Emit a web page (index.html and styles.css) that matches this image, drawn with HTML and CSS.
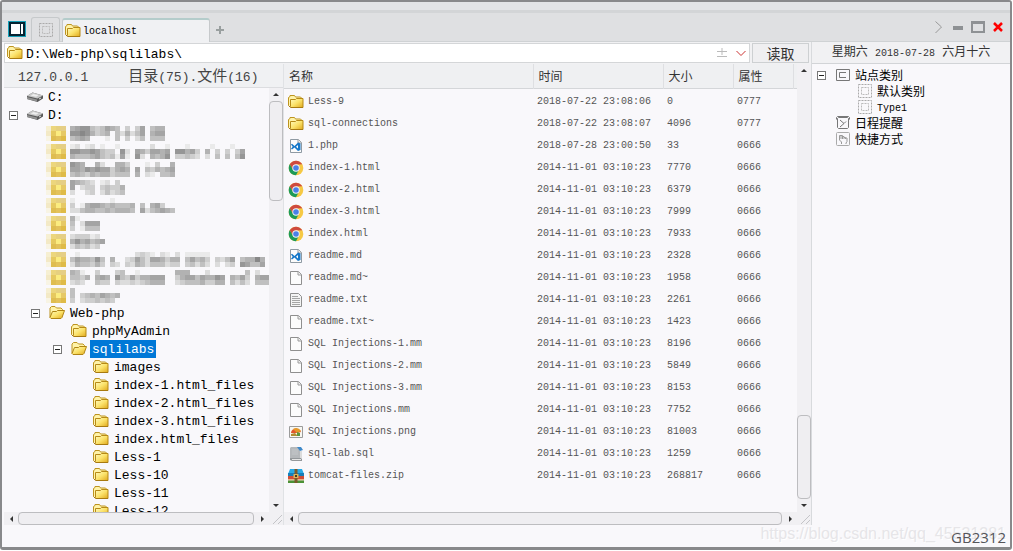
FILE: index.html
```html
<!DOCTYPE html>
<html lang="zh-CN">
<head>
<meta charset="utf-8">
<title>localhost</title>
<link rel="stylesheet" href="styles.css">
</head>
<body>
<svg class="defs" aria-hidden="true">
  <defs>
    <linearGradient id="gold" x1="0" y1="0" x2="1" y2="1"><stop offset="0" stop-color="#fffbc0"/><stop offset=".5" stop-color="#fbe26a"/><stop offset="1" stop-color="#e0a81c"/></linearGradient>
    <symbol id="folder" viewBox="0 0 16 16"><path d="M.5 11.5V3.5L2 2.5V1.5h4.500l1 1.500h5l1 1V13" fill="#fff3a8" stroke="#bd9420"/><path d="M3.500 13.500L2.500 12.500V5.500h5l1-1h6.500v9z" fill="url(#gold)" stroke="#b78a16"/><path d="M.5 11.500l2 2h12.500" fill="none" stroke="#a87a10"/></symbol>
    <symbol id="folder-open" viewBox="0 0 16 16"><path d="M1 12.500V3l1.500-1.500H6L7.500 3H12l1.500 1.500V7" fill="#fff3a8" stroke="#bd9420"/><path d="M1 12.500L3.500 6.500h4l1-1h7L13 12.500l-1 1H2z" fill="url(#gold)" stroke="#b08413"/></symbol>
    <symbol id="disk" viewBox="0 0 16 16"><path d="M0 7l5.500-3.500L16 6.500v3L10.500 13 0 10z" fill="#595959"/><path d="M0 7l5.500-3.500L16 6.500 10.500 9.500z" fill="#c9c9c9"/><path d="M3.500 6.500l3-1.500 5 1.200-2.500 1.600z" fill="#eee"/><path d="M0 8l10 2.500v2L0 10z" fill="#929292"/><path d="M12 9.500l2-1v1l-2 1z" fill="#ddd"/></symbol>
    <symbol id="page" viewBox="0 0 16 16"><path d="M2.500 1.500h8l3 3v10h-11z" fill="#fcfcfc" stroke="#8f8f8f"/><path d="M10 1.500v3.500h3.500" fill="#eee" stroke="#9c9c9c"/></symbol>
    <symbol id="text" viewBox="0 0 16 16"><path d="M2.500 1.500h8l3 3v10h-11z" fill="#f4f4f4" stroke="#8f8f8f"/><path d="M4 4.500h6M4 6.500h8M4 8.500h8M4 10.500h8M4 12.500h8" stroke="#a5a5a5"/></symbol>
    <symbol id="code" viewBox="0 0 16 16"><path d="M2.500 1.500h8l3 3v10h-11z" fill="#fcfcfc" stroke="#8f9aa3"/><path d="M10 1.500v3.500h3.500" fill="#eee" stroke="#9c9c9c"/><path d="M3 6.500l1-.7L6.500 8 10 4.500l2.500 1v6.500L10 13 6.500 9.500 4 11.500l-1-.7 1.700-2.100zM10 7L8 8.700l2 1.700z" fill="#1677c8" fill-rule="evenodd"/></symbol>
    <symbol id="chrome" viewBox="0 0 16 16"><circle cx="8" cy="8" r="7.300" fill="#f6c944"/><path d="M1.700 4.350A7.300 7.300 0 0 1 14.300 4.350L8 4.500 4.800 9.500z" fill="#cf4a3f"/><path d="M1.700 4.350A7.300 7.300 0 0 0 8 15.300L11.100 9.600 4.900 9.600z" fill="#1c9a58"/><circle cx="8" cy="8" r="3.700" fill="#f5f5f5"/><circle cx="8" cy="8" r="2.800" fill="#4a80e8"/></symbol>
    <symbol id="picture" viewBox="0 0 16 16"><path d="M1.500 2.500h13v11h-13z" fill="#f7f7f2" stroke="#9b9b9b"/><path d="M3 9c0-5 8-6 10-1l-4 1z" fill="#e0562c"/><path d="M5 5c3-2 6-1 8 2l-4 2z" fill="#e69829"/><path d="M3 12v-2l4-1 3 3z" fill="#b08c32"/><path d="M9 8v4h3V9z" fill="#5c963e"/></symbol>
    <symbol id="script" viewBox="0 0 16 16"><path d="M3 1h9v11H2V2z" fill="#b5b8bb"/><path d="M2 12h11l1 1v2H4l-2-1z" fill="#94989b"/><path d="M4 13h9v1H4z" fill="#e4e4e4"/><path d="M4 4h6M4 6h6M4 8h6" stroke="#c4c7ca"/><path d="M9 1h4l2 3-3 1z" fill="#3d88c9"/><path d="M12 5h2v7h-2z" fill="#dcdcdc"/></symbol>
    <symbol id="archive" viewBox="0 0 16 16"><path d="M2 1h12l2 5H0z" fill="#27aae6"/><path d="M0 5h16v3H0z" fill="#177fb9"/><path d="M0 8h16v3H0z" fill="#cf4d36"/><path d="M0 11h16v1.500H0z" fill="#e8b28a"/><path d="M0 12.500h16V15H0z" fill="#4c9237"/><path d="M6.500 1h3v14h-3z" fill="#7b5a2c"/><path d="M5.500 6h5v4h-5z" fill="#d9b45b"/><path d="M7 7h2v2H7z" fill="#4b3a20"/></symbol>
    <symbol id="dashed" viewBox="0 0 16 16"><path d="M1.500 1.500h13v13h-13z" fill="none" stroke="#aaa" stroke-dasharray="2 1"/><path d="M4.500 4.500h7v7h-7z" fill="none" stroke="#bbb" stroke-dasharray="2 1"/></symbol>
    <symbol id="category" viewBox="0 0 16 16"><path d="M1.500 2.500h13v11h-13z" fill="none" stroke="#777"/><path d="M11 5.500H4.500v5H11" fill="none" stroke="#777"/></symbol>
    <symbol id="clock" viewBox="0 0 16 16"><path d="M3.500 2.500h9l1 1v9l-1 1h-9l-1-1v-9zM1.500 4.500v-2l1-1h11l1 1v2" fill="none" stroke="#777"/><path d="M5 5l4 3.500L5 12M9 8.500l2-2" fill="none" stroke="#777"/></symbol>
    <symbol id="hand" viewBox="0 0 16 16"><rect x="1.500" y="1.500" width="13" height="13" rx="1" fill="none" stroke="#aaa"/><path d="M6.500 13V11L4.500 9V4.500H6V8M6 4.500h1.500V8M7.500 5.500H9V8M9 6.500h1.500V8M10.500 7H12v3.500l-1 1.500v1" fill="none" stroke="#999"/></symbol>
  </defs>
</svg>

<div class="window">
  <div class="caption"></div>
  <header class="tabs">
    <button class="panel-toggle" aria-label="侧栏"><svg viewBox="0 0 18 16"><path d="M0 0h18v16H0z" fill="#16a0b8"/><path d="M1 1h16v14H1z" fill="#062331"/><path d="M3 3h9v10H3zM13 3h2v10h-2z" fill="#fff"/></svg></button>
    <button class="tab tab-blank" aria-label="空白页"><svg class="icon"><use href="#dashed"/></svg></button>
    <button class="tab tab-active"><svg class="icon"><use href="#folder"/></svg><span>localhost</span></button>
    <button class="tab-add" aria-label="新建"><svg viewBox="0 0 10 10"><path d="M5 1v8M1 5h8" stroke="#999f9f" stroke-width="2"/></svg></button>
    <div class="window-buttons">
      <button aria-label="更多"><svg class="glyph" viewBox="0 0 16 16"><path d="M5.500 2.500l6 5.500-6 6" fill="none" stroke="#999"/></svg></button>
      <button aria-label="最小化"><svg class="glyph" viewBox="0 0 16 16"><path d="M3 7h10v4H3z" fill="#8e9194"/></svg></button>
      <button aria-label="最大化"><svg class="glyph" viewBox="0 0 16 16"><path d="M1 2h14v12H1zM3 5v7h10V5z" fill="#8e9194" fill-rule="evenodd"/></svg></button>
      <button aria-label="关闭"><svg class="glyph" viewBox="0 0 16 16"><path d="M4 4l8 8M12 4l-8 8" stroke="#f00" stroke-width="2.500"/></svg></button>
    </div>
  </header>

  <div class="body">
    <main class="manager">
      <form class="address">
        <div class="address-box">
          <svg class="icon"><use href="#folder"/></svg>
          <input class="path" type="text" aria-label="路径" value="D:\Web-php\sqlilabs\">
          <button class="mini" type="button" aria-label="上级"><svg viewBox="0 0 12 12"><path d="M6 1v7M1 4.500h10M1 9.500h10" stroke="#bbb" fill="none"/></svg></button>
          <button class="mini" type="button" aria-label="历史"><svg viewBox="0 0 12 12"><path d="M1.500 4L6 8.500 10.500 4" stroke="#c33" fill="none"/></svg></button>
        </div>
        <button class="read" type="button">读取</button>
      </form>

      <div class="panes">
        <section class="tree-pane">
          <div class="status"><span>127.0.0.1</span><span><b>目录</b>(75).<b>文件</b>(16)</span></div>
          <div class="scroll-area">
            <ul class="tree">
              <li><div class="node"><i></i><svg class="icon"><use href="#disk"/></svg><span>C:</span></div></li>
              <li><div class="node"><button class="fold" aria-label="折叠"></button><svg class="icon"><use href="#disk"/></svg><span>D:</span></div>
                <ul>
                  <li class="mosaics" id="mosaics"></li>
                  <li><div class="node"><button class="fold" aria-label="折叠"></button><svg class="icon"><use href="#folder-open"/></svg><span>Web-php</span></div>
                    <ul>
                      <li><div class="node"><i></i><svg class="icon"><use href="#folder"/></svg><span>phpMyAdmin</span></div></li>
                      <li><div class="node"><button class="fold" aria-label="折叠"></button><svg class="icon"><use href="#folder-open"/></svg><span class="selected">sqlilabs</span></div>
                        <ul>
                          <li><div class="node"><i></i><svg class="icon"><use href="#folder"/></svg><span>images</span></div></li>
                          <li><div class="node"><i></i><svg class="icon"><use href="#folder"/></svg><span>index-1.html_files</span></div></li>
                          <li><div class="node"><i></i><svg class="icon"><use href="#folder"/></svg><span>index-2.html_files</span></div></li>
                          <li><div class="node"><i></i><svg class="icon"><use href="#folder"/></svg><span>index-3.html_files</span></div></li>
                          <li><div class="node"><i></i><svg class="icon"><use href="#folder"/></svg><span>index.html_files</span></div></li>
                          <li><div class="node"><i></i><svg class="icon"><use href="#folder"/></svg><span>Less-1</span></div></li>
                          <li><div class="node"><i></i><svg class="icon"><use href="#folder"/></svg><span>Less-10</span></div></li>
                          <li><div class="node"><i></i><svg class="icon"><use href="#folder"/></svg><span>Less-11</span></div></li>
                          <li><div class="node"><i></i><svg class="icon"><use href="#folder"/></svg><span>Less-12</span></div></li>
                        </ul>
                      </li>
                    </ul>
                  </li>
                </ul>
              </li>
            </ul>
            <div class="vbar"><span class="arrow up"></span><div class="track"><div class="thumb thumb-tree"></div></div><span class="arrow down"></span></div>
          </div>
          <div class="hbar"><span class="arrow left"></span><div class="thumb"></div><span class="arrow right"></span><svg class="grip" viewBox="0 0 12 12"><path d="M2 11l9-9M7 11l4-4" stroke="#c4c4c8"/></svg></div>
        </section>

        <section class="file-pane">
          <div class="scroll-area">
            <div class="list">
              <table>
                <colgroup><col><col class="c-time"><col class="c-size"><col class="c-attr"><col class="c-end"></colgroup>
                <thead><tr><th>名称</th><th>时间</th><th>大小</th><th>属性</th><td></td></tr></thead>
                <tbody>
                  <tr><td><div class="file"><svg class="icon"><use href="#folder"/></svg>Less-9</div></td><td>2018-07-22 23:08:06</td><td>0</td><td>0777</td></tr>
                  <tr><td><div class="file"><svg class="icon"><use href="#folder"/></svg>sql-connections</div></td><td>2018-07-22 23:08:07</td><td>4096</td><td>0777</td></tr>
                  <tr><td><div class="file"><svg class="icon"><use href="#code"/></svg>1.php</div></td><td>2018-07-28 23:00:50</td><td>33</td><td>0666</td></tr>
                  <tr><td><div class="file"><svg class="icon"><use href="#chrome"/></svg>index-1.html</div></td><td>2014-11-01 03:10:23</td><td>7770</td><td>0666</td></tr>
                  <tr><td><div class="file"><svg class="icon"><use href="#chrome"/></svg>index-2.html</div></td><td>2014-11-01 03:10:23</td><td>6379</td><td>0666</td></tr>
                  <tr><td><div class="file"><svg class="icon"><use href="#chrome"/></svg>index-3.html</div></td><td>2014-11-01 03:10:23</td><td>7999</td><td>0666</td></tr>
                  <tr><td><div class="file"><svg class="icon"><use href="#chrome"/></svg>index.html</div></td><td>2014-11-01 03:10:23</td><td>7933</td><td>0666</td></tr>
                  <tr><td><div class="file"><svg class="icon"><use href="#code"/></svg>readme.md</div></td><td>2014-11-01 03:10:23</td><td>2328</td><td>0666</td></tr>
                  <tr><td><div class="file"><svg class="icon"><use href="#page"/></svg>readme.md~</div></td><td>2014-11-01 03:10:23</td><td>1958</td><td>0666</td></tr>
                  <tr><td><div class="file"><svg class="icon"><use href="#text"/></svg>readme.txt</div></td><td>2014-11-01 03:10:23</td><td>2261</td><td>0666</td></tr>
                  <tr><td><div class="file"><svg class="icon"><use href="#page"/></svg>readme.txt~</div></td><td>2014-11-01 03:10:23</td><td>1423</td><td>0666</td></tr>
                  <tr><td><div class="file"><svg class="icon"><use href="#page"/></svg>SQL Injections-1.mm</div></td><td>2014-11-01 03:10:23</td><td>8196</td><td>0666</td></tr>
                  <tr><td><div class="file"><svg class="icon"><use href="#page"/></svg>SQL Injections-2.mm</div></td><td>2014-11-01 03:10:23</td><td>5849</td><td>0666</td></tr>
                  <tr><td><div class="file"><svg class="icon"><use href="#page"/></svg>SQL Injections-3.mm</div></td><td>2014-11-01 03:10:23</td><td>8153</td><td>0666</td></tr>
                  <tr><td><div class="file"><svg class="icon"><use href="#page"/></svg>SQL Injections.mm</div></td><td>2014-11-01 03:10:23</td><td>7752</td><td>0666</td></tr>
                  <tr><td><div class="file"><svg class="icon"><use href="#picture"/></svg>SQL Injections.png</div></td><td>2014-11-01 03:10:23</td><td>81003</td><td>0666</td></tr>
                  <tr><td><div class="file"><svg class="icon"><use href="#script"/></svg>sql-lab.sql</div></td><td>2014-11-01 03:10:23</td><td>1259</td><td>0666</td></tr>
                  <tr><td><div class="file"><svg class="icon"><use href="#archive"/></svg>tomcat-files.zip</div></td><td>2014-11-01 03:10:23</td><td>268817</td><td>0666</td></tr>
                </tbody>
              </table>
            </div>
            <div class="vbar"><span class="arrow up"></span><div class="track track-end"><div class="thumb thumb-list"></div></div><span class="arrow down"></span></div>
          </div>
          <div class="hbar"><span class="arrow left"></span><div class="thumb"></div><span class="arrow right"></span><svg class="grip" viewBox="0 0 12 12"><path d="M2 11l9-9M7 11l4-4" stroke="#c4c4c8"/></svg></div>
        </section>
      </div>
    </main>

    <aside class="side">
      <div class="date">星期六 <span>2018-07-28</span> 六月十六</div>
      <ul class="categories">
        <li><div class="node"><button class="fold" aria-label="折叠"></button><svg class="icon"><use href="#category"/></svg><span>站点类别</span></div>
          <ul>
            <li><div class="node"><i></i><svg class="icon"><use href="#dashed"/></svg><span>默认类别</span></div></li>
            <li><div class="node"><i></i><svg class="icon"><use href="#dashed"/></svg><span class="latin">Type1</span></div></li>
          </ul>
        </li>
        <li><div class="node"><i></i><svg class="icon"><use href="#clock"/></svg><span>日程提醒</span></div></li>
        <li><div class="node"><i></i><svg class="icon"><use href="#hand"/></svg><span>快捷方式</span></div></li>
      </ul>
    </aside>
  </div>

  <footer class="foot">
    <span class="watermark">https://blog.csdn.net/qq_45531381</span>
    <span class="encoding">GB2312</span>
  </footer>
</div>
<script src="mosaic.js"></script>
</body>
</html>
```
FILE: styles.css
```css
* { box-sizing: border-box; }
html, body { height: 100%; }
body {
  margin: 0;
  background: #fff;
  color: #000;
  font-family: "Liberation Mono", "Noto Sans CJK SC", monospace;
  font-size: 13px;
}
button { margin: 0; padding: 0; border: 0; background: none; color: inherit; font: inherit; }
ul { margin: 0; padding: 0; list-style: none; }
svg { display: block; flex: none; }
.defs { position: absolute; width: 0; height: 0; }
.icon { width: 16px; height: 16px; }

.window {
  display: flex;
  flex-direction: column;
  height: calc(100% - 1px);
  margin-right: 1px;
  border: 2px solid #88898b;
  border-bottom-width: 3px;
  border-radius: 3px;
  background: #f9f8fb;
  overflow: hidden;
}
.caption { flex: none; height: 11px; background: #e2e4e6; border-bottom: 3px solid #d3d5d7; }

.tabs {
  display: flex;
  flex: none;
  align-items: flex-end;
  height: 29px;
  padding-left: 6px;
  background: #dfe0e2;
  border-bottom: 1px solid #cfd2d4;
}
.panel-toggle { align-self: center; margin-right: 5px; padding-top: 3px; }
.panel-toggle svg { width: 18px; height: 16px; }
.tab {
  display: flex;
  align-items: center;
  height: 24px;
  border: 1px solid #c6c9cb;
  border-bottom: 0;
  border-radius: 3px 3px 0 0;
}
.tab-blank { justify-content: center; width: 29px; margin-right: 2px; }
.tab-active {
  gap: 2px;
  width: 148px;
  margin-bottom: -1px;
  padding-left: 2px;
  border-top: 2px solid #b4cccb;
  background: #f0f1f3;
  font-size: 10px;
}
.tab-add { width: 20px; height: 22px; padding: 5px; }
.tab-add svg { width: 10px; height: 10px; }
.window-buttons { display: flex; gap: 4px; align-items: center; align-self: center; margin-left: auto; padding-right: 4px; }
.glyph { width: 16px; height: 16px; }

.body { display: flex; flex: 1; min-height: 0; }
.manager { display: flex; flex: 1; flex-direction: column; min-width: 0; padding-left: 2px; }

.address { display: flex; flex: none; gap: 2px; height: 22px; padding: 1px 2px 1px 0; background: #f1f1f3; }
.address-box { display: flex; flex: 1; align-items: center; gap: 3px; min-width: 0; border: 1px solid #d4d6d8; padding: 0 0 0 2px; background: #fff; }
.path { flex: 1; min-width: 0; height: 18px; padding: 3px 0 0; border: 0; outline: 0; background: none; color: #000; font: inherit; }
.mini { width: 16px; height: 16px; padding: 2px; }
.mini svg { width: 12px; height: 12px; }
.read { width: 57px; border: 1px solid #cdd0d2; background: #efeff1; color: #333; font-size: 14px; line-height: 18px; padding-top: 2px; }

.panes { display: flex; flex: 1; min-height: 0; }
.tree-pane { display: flex; flex: none; flex-direction: column; width: 280px; border-right: 1px solid #e0e2e5; }
.file-pane { display: flex; flex: 1; flex-direction: column; min-width: 0; }
.scroll-area { display: flex; flex: 1; min-height: 0; }

.status {
  display: flex;
  flex: none;
  gap: 40px;
  height: 24px;
  padding: 4px 0 0 14px;
  border-bottom: 1px solid #dcdde0;
  background: #f0f1f3;
  color: #444;
  line-height: 20px;
  white-space: nowrap;
}
.status b { font-size: 15px; font-weight: 400; line-height: 18px; }

.tree { flex: 1; min-width: 0; overflow: hidden; padding-left: 5px; }
.tree ul, .categories ul { padding-left: 22px; }
.node { display: flex; align-items: center; height: 18px; white-space: nowrap; }
.node i, .fold { flex: none; width: 9px; height: 9px; margin-right: 9px; }
.fold { border: 1px solid #777; background: linear-gradient(#222, #222) center / 5px 1px no-repeat #fff; }
.node span { margin-left: 3px; padding: 1px 2px 0; line-height: 17px; }
.node .selected { background: #0078d7; color: #fff; }
.mosaics svg { margin-left: 15px; }

.vbar { display: flex; flex: none; flex-direction: column; align-items: center; width: 14px; background: #f1f0f3; }
.track { display: flex; flex: 1; flex-direction: column; width: 100%; min-height: 0; }
.track-end { justify-content: flex-end; }
.thumb { border: 1px solid #bdbdc0; border-radius: 4px; background: #efeef1; }
.thumb-tree { height: 25%; }
.thumb-list { height: 20%; }
.hbar { display: flex; flex: none; align-items: center; height: 13px; background: #f1f0f3; }
.hbar .thumb { flex: 1; height: 13px; }
.arrow { display: flex; flex: none; align-items: center; justify-content: center; width: 14px; height: 13px; }
.arrow::before { content: ""; border: 3px solid transparent; }
.hbar .right { width: 17px; }
.up::before { border-top: 0; border-bottom-color: #333; }
.down::before { border-bottom: 0; border-top-color: #333; }
.left::before { border-left: 0; border-right-color: #333; }
.right::before { border-right: 0; border-left-color: #333; }
.grip { width: 12px; height: 12px; }

.list { flex: 1; min-width: 0; overflow: hidden; }
table { width: 100%; border-collapse: collapse; table-layout: fixed; color: #555; font-size: 10px; }
.c-time { width: 130px; }
.c-size { width: 70px; }
.c-attr { width: 60px; }
.c-end { width: 4px; }
th, td { padding: 0 0 0 4px; text-align: left; white-space: nowrap; }
thead tr { height: 24px; border-bottom: 1px solid #d4d6d9; background: #eff0f2; }
th { border-right: 1px solid #dedfe2; color: #333; font-size: 12px; font-weight: 400; line-height: 18px; padding: 4px 0 0 5px; }
tbody::before { content: ""; display: block; height: 2px; }
tbody tr { height: 22px; }
tbody td { padding-top: 1px; line-height: 16px; }
.file { display: flex; align-items: center; gap: 4px; }

.side { display: flex; flex: none; flex-direction: column; width: 199px; border-left: 1px solid #d8dadd; }
.date { flex: none; height: 22px; padding-top: 1px; border-bottom: 1px solid #d2d4d7; background: #f1f1f3; color: #333; font-size: 12px; line-height: 20px; text-align: center; white-space: pre; }
.date span, .categories .latin { font-size: 10px; }
.categories { padding: 3px 0 0 5px; font-size: 12px; }
.categories .node { height: 16px; }
.categories .node span { padding: 3px 1px 0; line-height: 16px; }

.foot { position: relative; flex: none; height: 22px; text-align: right; }
.encoding { position: relative; padding-right: 4px; color: #55555a; font-family: "Open Sans", "Noto Sans", sans-serif; font-size: 15px; line-height: 24px; }
.watermark { position: absolute; right: 4px; bottom: 3px; color: #e6e5e8; text-shadow: 1px 1px 0 #fff; font-family: "Liberation Sans", sans-serif; font-size: 16px; line-height: 20px; }
```
FILE: mosaic.js
```js
// Masked folder names: each entry is three lines of blocks, 0 = empty, 9 = darkest.
const rows = [
  ["5677434654030360455", "7787534504252460566", "4565000104030240444"],
  ["12012010010000002001000100001000100", "77667643307206536656077563050303036", "54445643416107205457033432020404047"],
  ["765005200553000103005", "665767663565060435456", "454354553444050210445"],
  ["65432012030", "60233034335", "20023024234"],
  ["100000001000000000000", "301566545444504056300", "224554454555406245654"],
  ["510000", "402666", "301444"],
  ["2333120", "5756456", "2434230"],
  ["010000000000023210210201111100000000000", "465547405002364266535504645303246045585", "254435303203254244423303424202023076446"],
  ["5410030003400100000005550002000000040200", "4435056507436355666003566465576054630566", "2320043303223234555002344453355042420444"],
  ["4000000000", "4034546545", "3023343430"]
];
const NS = "http://www.w3.org/2000/svg";
const rect = (svg, x, y, w, h, fill) => {
  const r = document.createElementNS(NS, "rect");
  Object.entries({ x, y, width: w, height: h, fill }).forEach(([k, v]) => r.setAttribute(k, v));
  svg.append(r);
};
const gold = [["#f6efd2", "#ecd67d", "#e6d080", "#e5ce86"], ["#f3e9c6", "#e6c95f", "#fbec80", "#e6c966"], ["#f8f4e4", "#dfbd50", "#e3c25c", "#dfbb48"]];
rows.forEach(lines => {
  const svg = document.createElementNS(NS, "svg");
  svg.setAttribute("width", 230);
  svg.setAttribute("height", 18);
  gold.forEach((line, j) => line.forEach((c, i) => rect(svg, i * 5, 2 + j * 5, 5, 5, c)));
  lines.forEach((line, j) => [...line].forEach((n, i) => {
    if (+n) {
      const v = 248 - n * 14;
      rect(svg, 24 + i * 5, 2 + j * 5, 5, 5, `rgb(${v},${v},${v})`);
    }
  }));
  document.getElementById("mosaics").append(svg);
});
```
